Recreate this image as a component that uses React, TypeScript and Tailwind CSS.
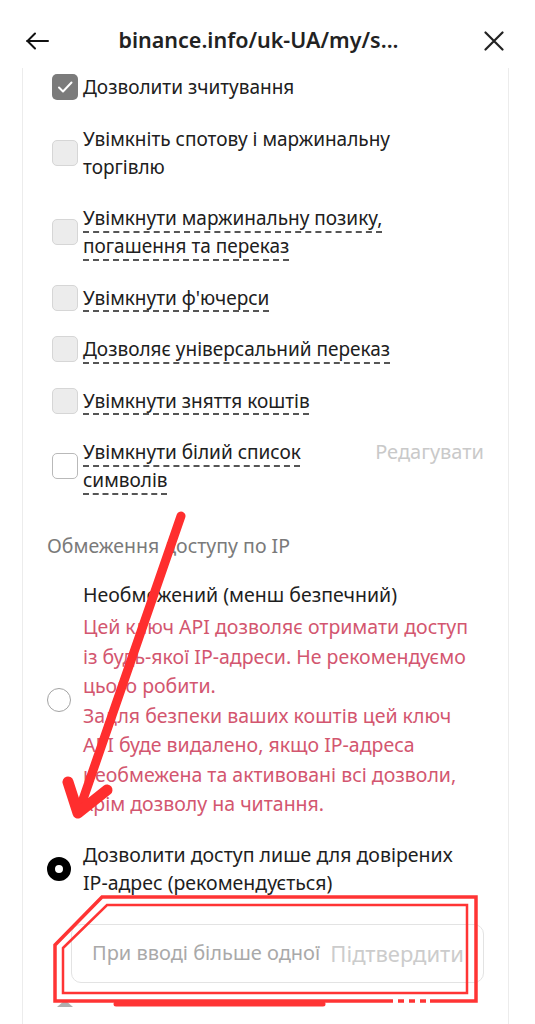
import React from 'react';

type Permission = {
  label: string;
  checked?: boolean;
  dotted?: boolean;
  outline?: boolean;
  edit?: boolean;
};

const permissions: Permission[] = [
  { label: 'Дозволити зчитування', checked: true },
  { label: 'Увімкніть спотову і маржинальну торгівлю' },
  { label: 'Увімкнути маржинальну позику, погашення та переказ', dotted: true },
  { label: "Увімкнути ф'ючерси", dotted: true },
  { label: 'Дозволяє універсальний переказ', dotted: true },
  { label: 'Увімкнути зняття коштів', dotted: true },
  { label: 'Увімкнути білий список символів', dotted: true, outline: true, edit: true },
];

function Checkbox({ checked, outline }: { checked?: boolean; outline?: boolean }) {
  if (checked) {
    return (
      <div className="flex h-[26px] w-[26px] shrink-0 items-center justify-center rounded-[5px] bg-[#7b7b7b]">
        <svg width="18" height="18" viewBox="0 0 18 18" fill="none">
          <path d="M3 9.5l4 4L15.5 4.5" stroke="white" strokeWidth="2" strokeLinecap="round" strokeLinejoin="round" />
        </svg>
      </div>
    );
  }
  return (
    <div
      className={
        outline
          ? 'h-[26px] w-[26px] shrink-0 rounded-[5px] border-[1.5px] border-[#b9b9b9] bg-white'
          : 'h-[26px] w-[26px] shrink-0 rounded-[5px] border-[1.5px] border-[#d6d6d6] bg-[#ececec]'
      }
    />
  );
}

function PermissionRow({ item }: { item: Permission }) {
  return (
    <div className="flex items-center">
      <Checkbox checked={item.checked} outline={item.outline} />
      <div className={item.edit ? 'ml-[5px] max-w-[260px]' : 'ml-[5px] max-w-[345px]'}>
        <span
          className={
            item.dotted
              ? 'text-[19px] leading-[28px] text-[#202020] underline decoration-dashed decoration-[#555] decoration-[1.5px] underline-offset-[6px]'
              : 'text-[19px] leading-[28px] text-[#202020]'
          }
        >
          {item.label}
        </span>
      </div>
      {item.edit && (
        <span className="ml-auto self-start text-[20px] leading-[28px] text-[#c9c9c9]">Редагувати</span>
      )}
    </div>
  );
}

export default function App() {
  return (
    <div className="relative flex h-[1024px] w-[535px] flex-col overflow-hidden bg-white font-['Noto_Sans',sans-serif]">
      {/* top bar */}
      <div className="flex h-[68px] shrink-0 items-center pt-[13px] pl-[25px] pr-[31px]">
        <svg width="24" height="18" viewBox="0 0 24 18" fill="none">
          <path d="M23 9H2M10 1.5L2.5 9l7.5 7.5" stroke="#111" strokeWidth="2" strokeLinecap="round" strokeLinejoin="round" />
        </svg>
        <div className="flex-1 pr-[16px] text-center text-[21.5px] font-semibold text-[#222]">binance.info/uk-UA/my/s...</div>
        <svg width="20" height="20" viewBox="0 0 20 20" fill="none">
          <path d="M1.5 1.5l17 17M18.5 1.5l-17 17" stroke="#222" strokeWidth="2.2" strokeLinecap="round" />
        </svg>
      </div>

      {/* card */}
      <div className="ml-[22px] flex w-[487px] flex-1 flex-col border-x border-[#ececec] pl-[24px] pr-[24px] pt-[5px]">
        <div className="flex flex-col gap-[23.5px] pl-[5px]">
          {permissions.map((p) => (
            <PermissionRow key={p.label} item={p} />
          ))}
        </div>

        <div className="mt-[38px] text-[19.5px] leading-[28px] text-[#7a7a7a]">Обмеження доступу по IP</div>

        <div className="mt-[21px] flex items-center gap-[12px]">
          <div className="h-[24px] w-[24px] shrink-0 rounded-full border-[1.5px] border-[#a3a3a3]" />
          <div className="w-[400px]">
            <div className="text-[19.5px] leading-[28px] text-[#1e1e1e]">Необмежений (менш безпечний)</div>
            <div className="mt-[3px] text-[19.5px] leading-[29.5px] text-[#d3566f]">
              <p>Цей ключ API дозволяє отримати доступ із будь-якої IP-адреси. Не рекомендуємо цього робити.</p>
              <p>Задля безпеки ваших коштів цей ключ API буде видалено, якщо IP-адреса необмежена та активовані всі дозволи, крім дозволу на читання.</p>
            </div>
          </div>
        </div>

        <div className="mt-[22px] flex items-center gap-[12px]">
          <div className="h-[24px] w-[24px] shrink-0 rounded-full border-[8px] border-black bg-white" />
          <div className="max-w-[390px] text-[19.5px] leading-[28px] text-[#1e1e1e]">
            Дозволити доступ лише для довірених IP-адрес (рекомендується)
          </div>
        </div>

        <div className="ml-[24px] mt-[27px] flex h-[59px] w-[413px] items-center rounded-[10px] border border-[#e3e3e3] pl-[20px] pr-[19px]">
          <input
            className="min-w-0 flex-1 bg-transparent text-[20px] outline-none placeholder:text-[#a9a9a9]"
            placeholder="При вводі більше одної"
          />
          <span className="ml-[8px] text-[22px] text-[#cccccc]">Підтвердити</span>
        </div>

        <div className="ml-[10px] mt-[17px] h-0 w-0 border-x-[8px] border-b-[7px] border-x-transparent border-b-[#b0b0b0]" />
      </div>

      {/* red annotations drawn over the screenshot */}
      <svg className="pointer-events-none absolute left-0 top-0" width="535" height="1024" viewBox="0 0 535 1024" fill="none">
        <path d="M181 516L79 811" stroke="#ff2e2e" strokeWidth="9" strokeLinecap="round" />
        <path d="M68 782L78 813L107 790" stroke="#ff2e2e" strokeWidth="11" strokeLinecap="round" strokeLinejoin="round" />

        <path d="M387 1001H55V945L102 897H476V1001H430" stroke="#ff3434" strokeWidth="3.5" />
        <path d="M387 1001H428" stroke="#ff3434" strokeWidth="3.5" strokeDasharray="6 5" />
        <path d="M116 1004H323" stroke="#ff3434" strokeWidth="5" strokeLinecap="round" />
        <path d="M63 948L107 905H467V993H63Z" stroke="#ff3434" strokeWidth="2.5" />
      </svg>
    </div>
  );
}
